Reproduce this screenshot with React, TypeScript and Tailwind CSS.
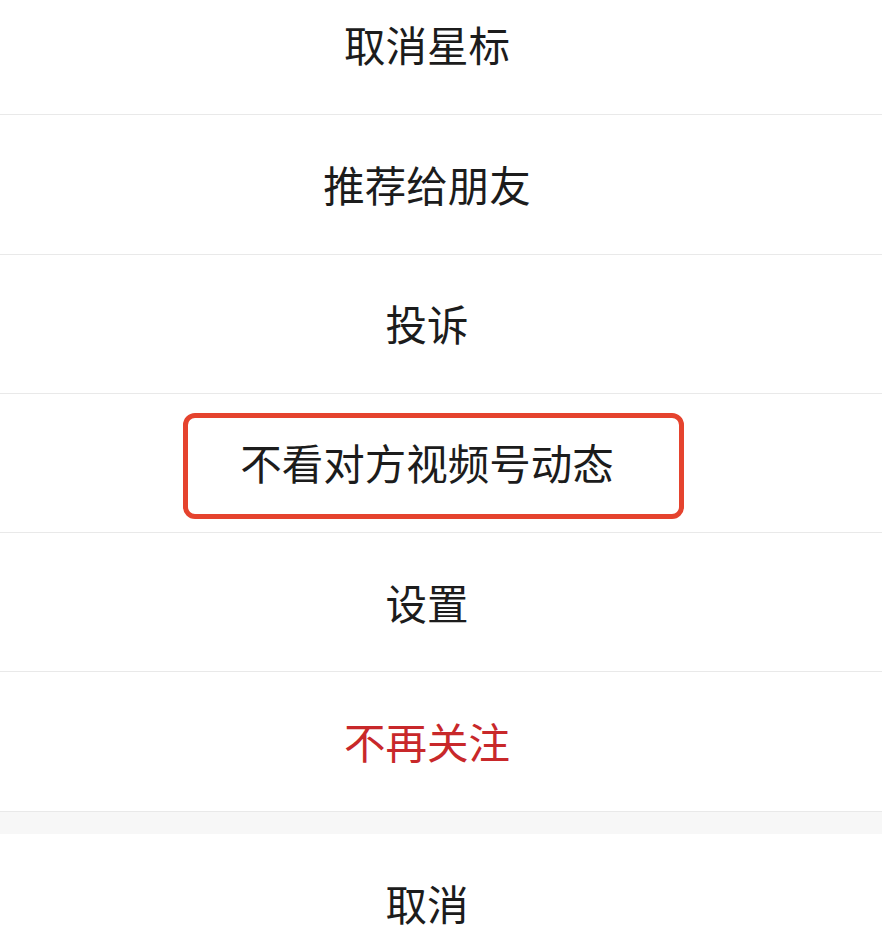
import React from "react";

const items: { label: string; red?: boolean; boxed?: boolean }[] = [
  { label: "取消星标" },
  { label: "推荐给朋友" },
  { label: "投诉" },
  { label: "不看对方视频号动态", boxed: true },
  { label: "设置" },
  { label: "不再关注", red: true },
];

export default function App() {
  return (
    <div
      className="w-[882px] h-[948px] overflow-hidden bg-white"
      style={{ fontFamily: '"Noto Sans CJK SC", "Noto Sans", sans-serif' }}
    >
      <div className="-mt-[24px] flex flex-col">
        {items.map((it) => (
          <div
            key={it.label}
            className="relative h-[139.3px] border-b-[1.5px] border-[#e9e9e9] flex items-center justify-center pr-[28px]"
          >
            <span
              className={`text-[41.5px] leading-none ${
                it.red ? "text-[#c8282a]" : "text-[#1c1c1c]"
              }`}
            >
              {it.label}
            </span>
            {it.boxed && (
              <div className="absolute left-[183px] top-[19px] w-[501px] h-[106px] border-[5px] border-[#e5432e] rounded-[12px]" />
            )}
          </div>
        ))}
        <div className="h-[22px] bg-[#f7f7f7]" />
        <div className="h-[139px] flex items-center justify-center pr-[28px]">
          <span className="text-[41.5px] leading-none text-[#1c1c1c]">取消</span>
        </div>
      </div>
    </div>
  );
}
